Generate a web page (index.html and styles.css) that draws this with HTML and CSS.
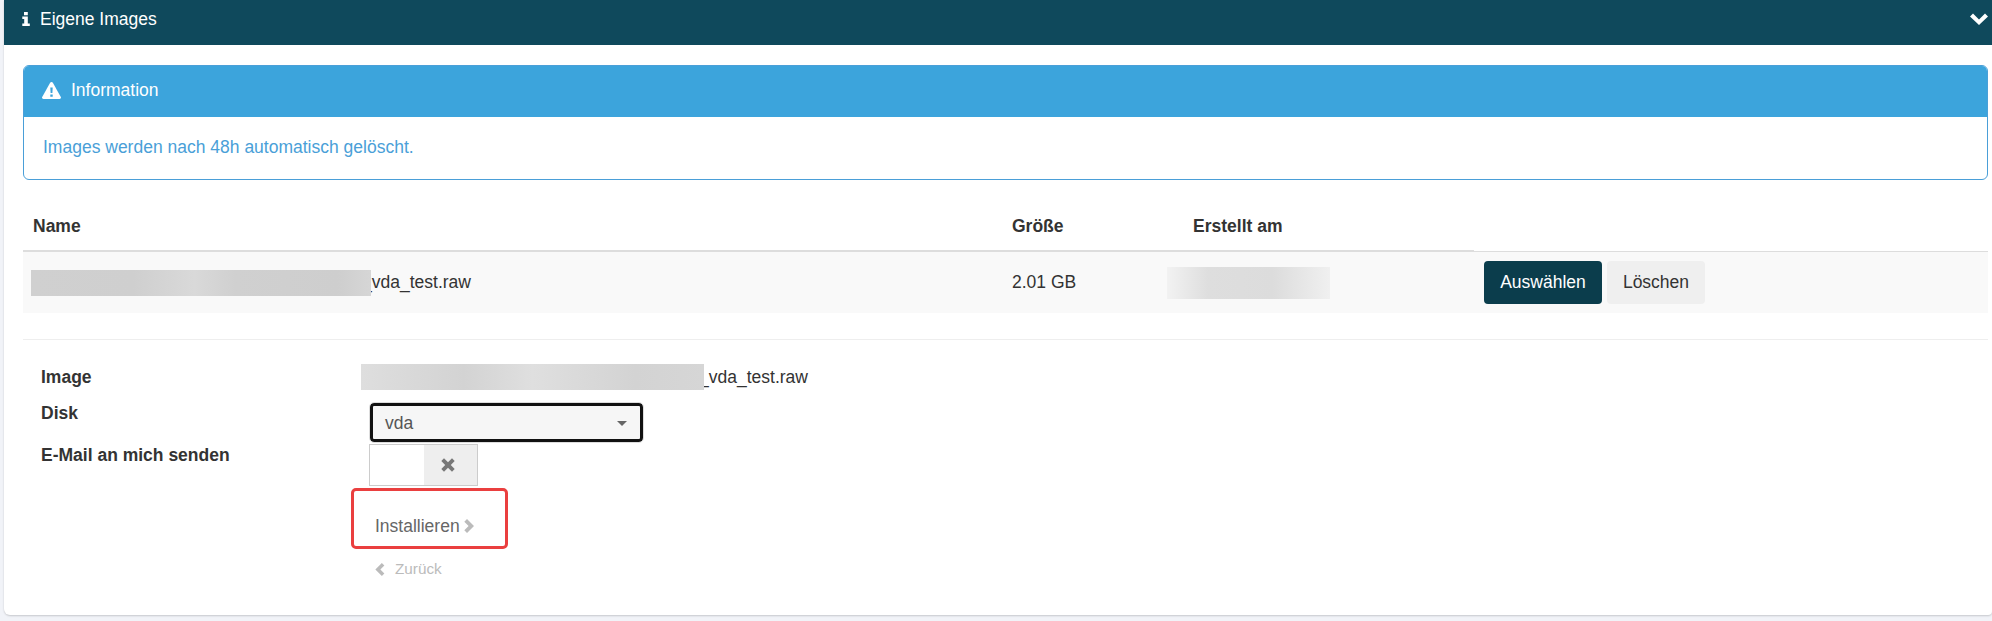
FILE: index.html
```html
<!DOCTYPE html>
<html lang="de">
<head>
<meta charset="utf-8">
<title>Eigene Images</title>
<link rel="stylesheet" href="styles.css">
</head>
<body>
<section class="panel">
  <header class="panel-head">
    <div class="panel-title">
      <svg class="icon-info" viewBox="0 0 8 14"><path d="M2 0h3.800v3.200H2zM.3 4.400h5.500v7.100h2V14H.3v-2.500h1.900V6.900H.3z" fill="#fff"/></svg>
      <span>Eigene Images</span>
    </div>
    <svg class="icon-down" viewBox="0 0 18 12"><path d="M3 .5 9 6.500 15 .5 18 3.500 9 12 0 3.500z" fill="#fff"/></svg>
  </header>
  <div class="panel-body">
    <div class="alert">
      <div class="alert-head">
        <svg class="icon-warn" viewBox="0 0 19 17"><path d="M9.500 0c.7 0 1.200.4 1.500.9l7.800 14c.5 1-.1 2.100-1.300 2.100H1.500C.3 17-.3 15.900.2 14.900L8 .9C8.300.4 8.800 0 9.500 0z" fill="#fff"/><path d="M8.300 5.500h2.400l-.3 5.500H8.600zM8.300 12.400h2.400v2.300H8.300z" fill="#3ca4dc"/></svg>
        <span>Information</span>
      </div>
      <p class="alert-text">Images werden nach 48h automatisch gelöscht.</p>
    </div>

    <table class="images">
      <thead>
        <tr>
          <th class="col-name">Name</th>
          <th class="col-size">Größe</th>
          <th class="col-date">Erstellt am</th>
          <th class="col-actions"></th>
        </tr>
      </thead>
      <tbody>
        <tr>
          <td class="cell-name"><span class="blur blur-name"></span><span class="file file-table">_vda_test.raw</span></td>
          <td class="cell-size">2.01 GB</td>
          <td class="cell-date"><span class="blur blur-date"></span></td>
          <td class="cell-actions"><button class="btn btn-primary">Auswählen</button><button class="btn btn-light">Löschen</button></td>
        </tr>
      </tbody>
    </table>

    <hr class="divider">

    <form class="install">
      <div class="row row-image">
        <div class="label">Image</div>
        <div class="value"><span class="blur blur-image"></span><span class="file file-form">_vda_test.raw</span></div>
      </div>
      <div class="row row-disk">
        <div class="label">Disk</div>
        <div class="select"><span>vda</span><i class="caret"></i></div>
      </div>
      <div class="row row-mail">
        <div class="label">E-Mail an mich senden</div>
        <div class="toggle"><span class="toggle-on"></span><span class="toggle-off">
          <svg class="icon-x" viewBox="0 0 14 14"><path d="M3 .3 7 4.200 11 .3 13.700 3 9.800 7l3.900 4-2.700 2.700L7 9.800l-4 3.900L.3 11l3.900-4L.3 3z" fill="#777"/></svg>
        </span></div>
      </div>
      <div class="actions">
        <div class="highlight">
          <a class="link-next">Installieren<svg class="icon-chev" viewBox="0 0 10 14"><path d="M3 0 10 7 3 14 .3 11.300 4.600 7 .3 2.700z" fill="#bbb"/></svg></a>
        </div>
        <a class="link-back"><svg class="icon-chev-small" viewBox="0 0 10 14"><path d="M7 0 0 7 7 14 9.700 11.300 5.400 7 9.700 2.700z" fill="#bbb"/></svg>Zurück</a>
      </div>
    </form>
  </div>
</section>
</body>
</html>
```

FILE: styles.css
```css
* { box-sizing: border-box; }
html, body { margin: 0; padding: 0; }
body {
  background: #f1f3f8;
  font-family: "Liberation Sans", Arial, sans-serif;
  font-size: 17.5px;
  color: #333;
  height: 621px;
  overflow: hidden;
  padding-left: 4px;
}
.panel {
  height: 615px;
  background: #fff;
  border-radius: 0 0 4px 6px;
  box-shadow: 0 1px 2px rgba(0,0,0,.18);
}
.panel-head {
  height: 45px;
  background: #0f495c;
  color: #fff;
  display: flex;
  align-items: center;
  justify-content: space-between;
  padding: 0 0 0 18px;
}
.panel-title { display: flex; align-items: center; gap: 10px; padding-bottom: 7px; }
.icon-info { width: 8px; height: 14px; display: block; }
.icon-down { width: 18px; height: 12px; display: block; margin: 0 4px 8px 0; }
.panel-body { padding: 20px 4px 0 19px; }
.alert {
  height: 115px;
  border: 1px solid #4a9fd8;
  border-radius: 6px;
  overflow: hidden;
}
.alert-head {
  height: 51px;
  background: #3ca4dc;
  color: #fff;
  display: flex;
  align-items: center;
  gap: 10px;
  padding: 0 0 2px 18px;
}
.icon-warn { width: 19px; height: 17px; display: block; }
.alert-text { margin: 0; padding: 20px 0 0 19px; color: #4a9fd8; line-height: 20px; }
.images {
  width: 100%;
  margin-top: 22px;
  border-collapse: collapse;
  table-layout: fixed;
}
.images th {
  height: 49px;
  text-align: left;
  font-weight: bold;
  color: #333;
  padding: 0;
  border-bottom: 2px solid #ddd;
  vertical-align: middle;
}
.images th.col-actions { border-bottom: 1px solid #ddd; }
.images td { background: #f9f9f9; height: 62px; padding: 0; vertical-align: middle; }
.col-name { width: 981px; padding-left: 10px !important; }
.col-size { width: 181px; padding-left: 8px !important; }
.col-date { width: 289px; padding-left: 8px !important; }
.cell-name { padding-left: 8px !important; }
.cell-name span, .value span { display: inline-block; vertical-align: middle; }
.cell-size { padding-left: 8px !important; }
.blur { position: relative; z-index: 1; background: linear-gradient(90deg, #d0d0d0, #cfcfcf 30%, #d9d9d9 48%, #d0d0d0 60%, #cecece 90%, #d6d6d6); }
.file-table { margin-left: -9px; }
.file-form { margin-left: -5px; }
.blur-name { width: 340px; height: 26px; }
.blur-date {
  display: block;
  width: 163px;
  height: 32px;
  margin-left: -18px;
  background: linear-gradient(90deg, #f2f2f2, #dedede 25%, #dcdcdc 65%, #f0f0f0);
}
.cell-actions { padding-left: 10px !important; }
.btn {
  height: 43px;
  border: 0;
  border-radius: 4px;
  font: 17.5px "Liberation Sans", Arial, sans-serif;
  padding: 0;
  vertical-align: middle;
}
.btn-primary { width: 118px; background: #0b3d4c; color: #fff; margin-right: 5px; }
.btn-light { width: 98px; background: #efefef; color: #333; }
.divider { border: 0; border-top: 1px solid #eee; margin: 26px 0 0; }
.install { padding: 24px 0 0 18px; }
.row { display: flex; }
.label { width: 320px; font-weight: bold; line-height: 20px; color: #333; }
.row-image { height: 26px; align-items: center; }
.blur-image { width: 343px; height: 26px; background: linear-gradient(90deg, #dedede, #d3d3d3 30%, #dfdfdf 50%, #d3d3d3 80%, #d6d6d6); }
.row-disk { margin-top: 13px; height: 41px; }
.select {
  width: 273px;
  height: 39px;
  margin-left: 9px;
  border: 3px solid #111;
  outline: 1px solid #ddd;
  border-radius: 4px;
  background: #f6f6f6;
  color: #555;
  display: flex;
  align-items: center;
  justify-content: space-between;
  padding: 2px 13px 0 12px;
}
.caret { width: 0; height: 0; border: 5px solid transparent; border-top: 5px solid #666; border-bottom: 0; }
.row-mail { height: 44px; }
.row-mail .label { padding-top: 1px; }
.toggle {
  width: 109px;
  height: 42px;
  margin-left: 8px;
  border: 1px solid #ccc;
  display: flex;
}
.toggle-on { width: 54px; background: #fff; }
.toggle-off { flex: 1; background: #eee; display: flex; align-items: center; justify-content: center; padding-right: 6px; }
.icon-x { width: 14px; height: 14px; display: block; }
.actions { margin-left: 328px; }
.highlight {
  width: 157px;
  height: 61px;
  border: 3px solid #ea3f3f;
  border-radius: 5px;
  padding: 25px 0 0 21px;
  margin-left: -18px;
}
.link-next { color: #666; line-height: 20px; display: flex; align-items: center; gap: 4px; }
.icon-chev { width: 10px; height: 14px; display: block; }
.link-back { display: flex; align-items: center; gap: 10px; color: #bbb; font-size: 15.300px; line-height: 16px; margin: 12px 0 0 6px; }
.icon-chev-small { width: 10px; height: 13px; display: block; }
```
